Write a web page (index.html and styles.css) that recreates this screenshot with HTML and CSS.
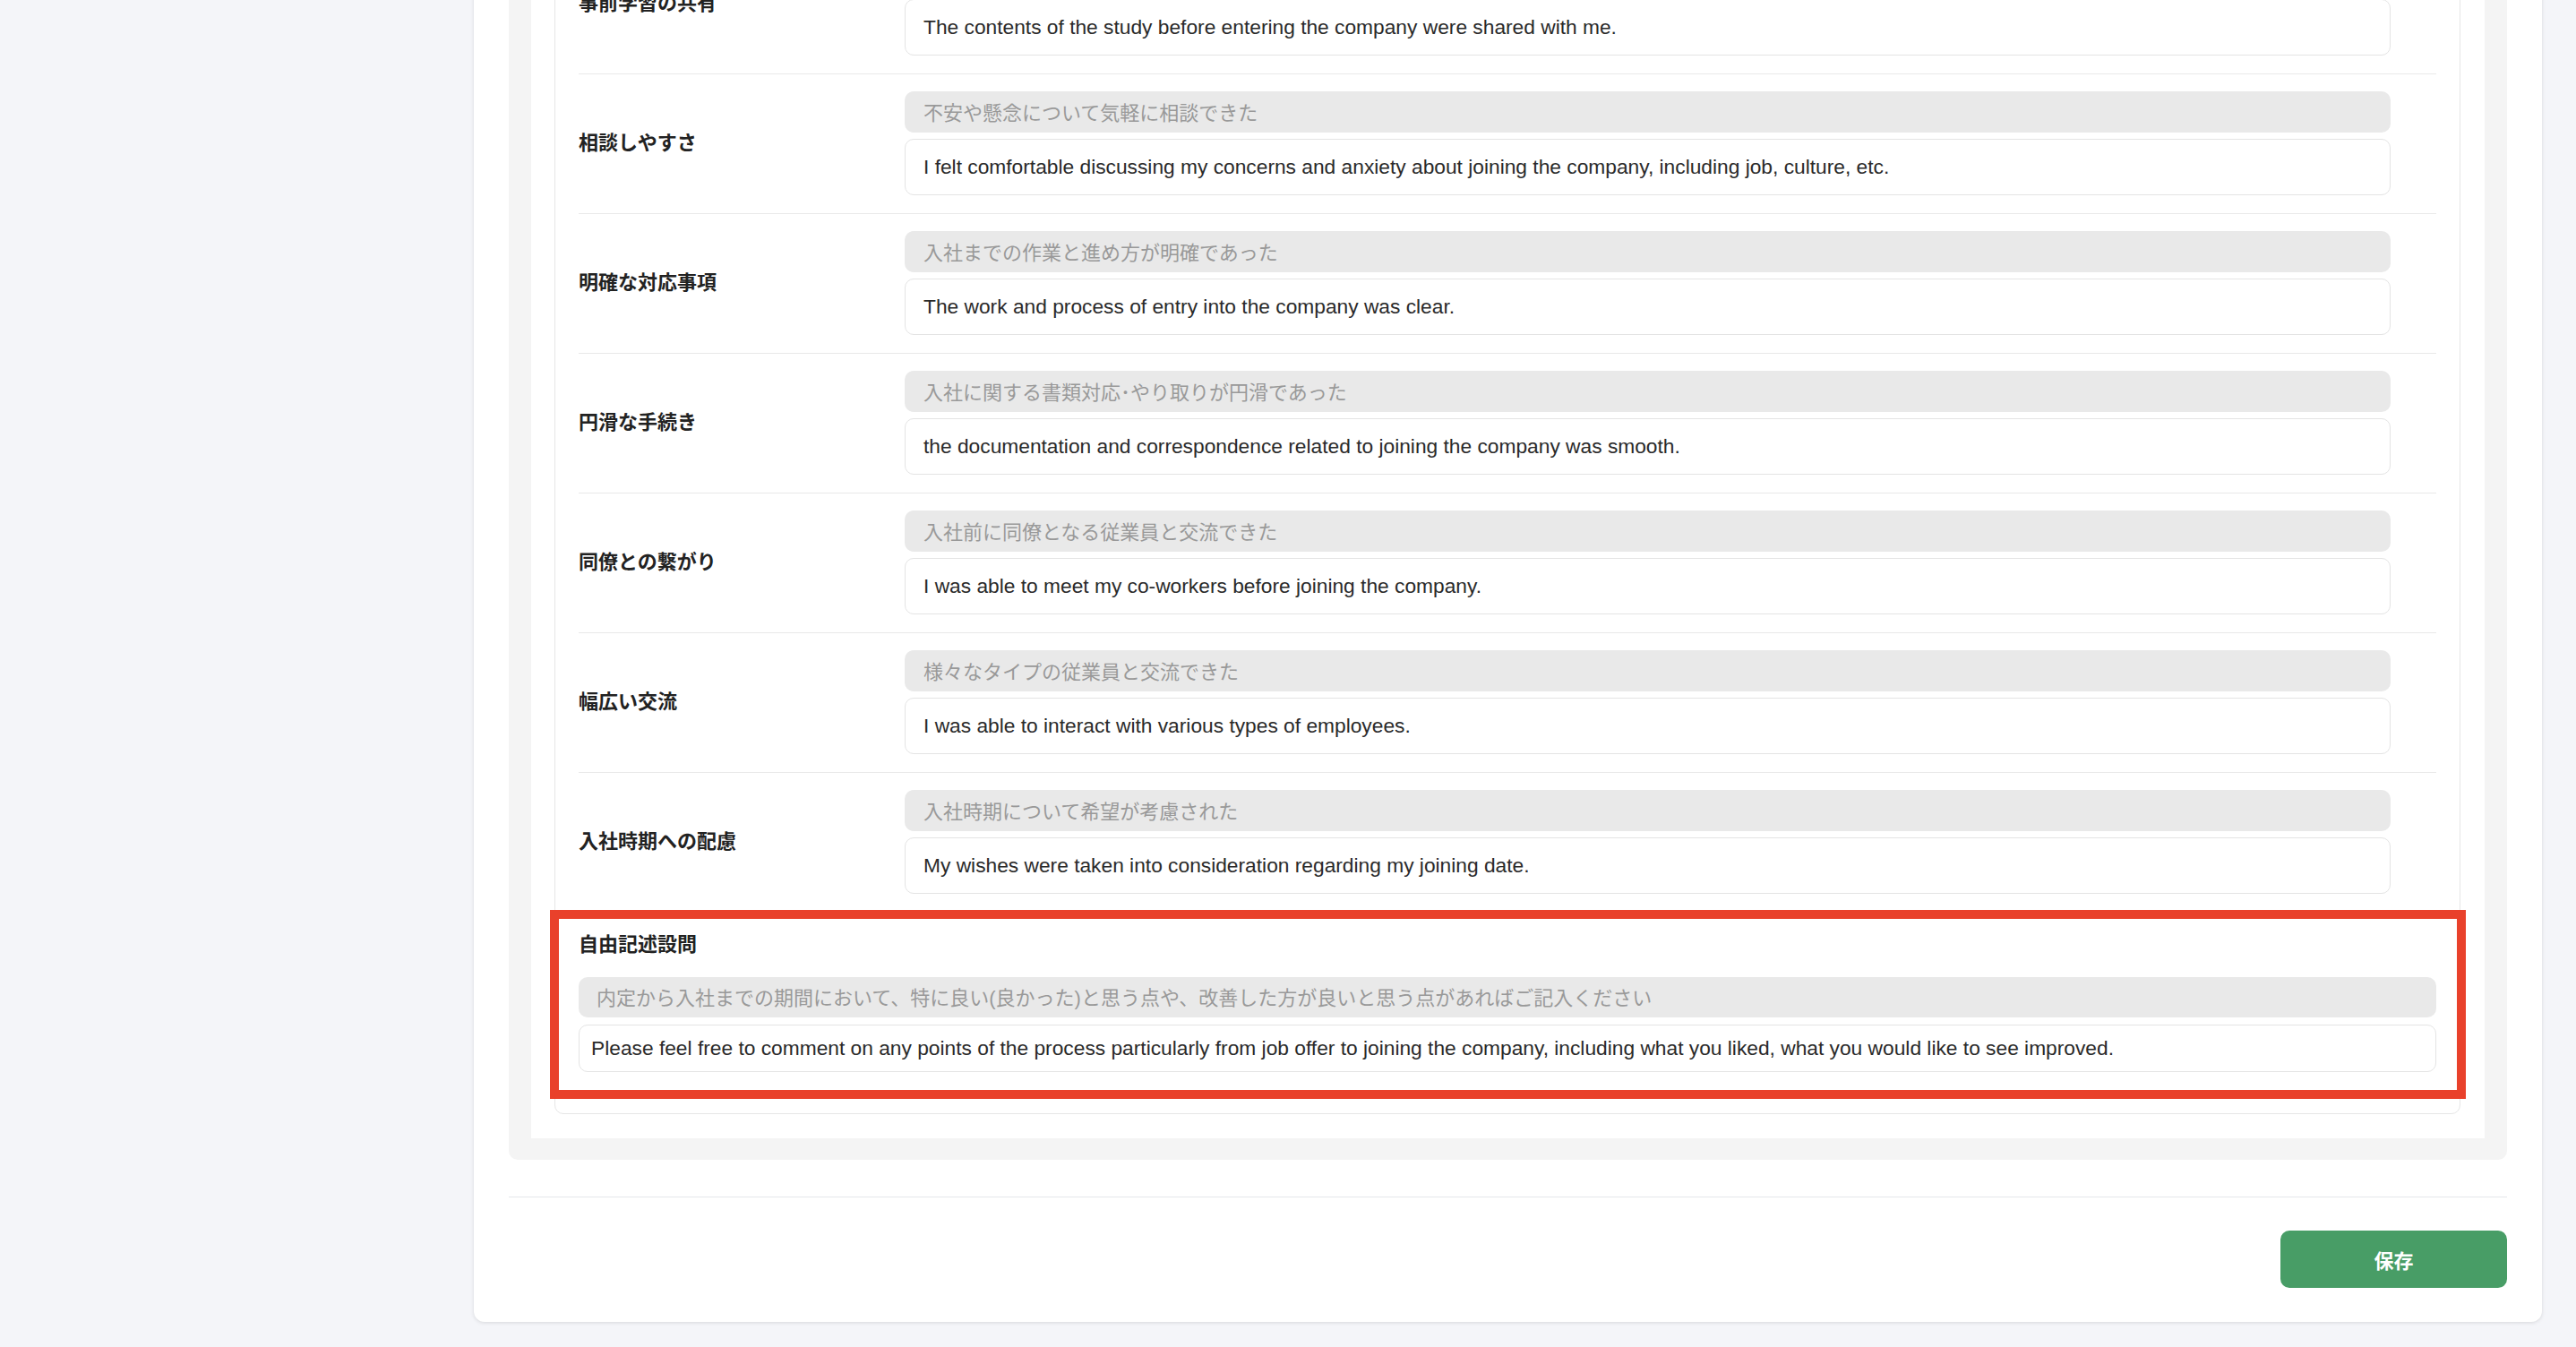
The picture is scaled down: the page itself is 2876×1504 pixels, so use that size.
FILE: index.html
```html
<!DOCTYPE html>
<html lang="ja">
<head>
    <meta charset="UTF-8">
    <title>アンケート設定</title>
    <link rel="stylesheet" href="styles.css">
</head>
<body>
    <div class="layout">
        <aside class="sidebar"></aside>

        <main class="main">
            <section class="card">
                <div class="panel">
                    <div class="panel-inner">
                        <div class="qbox">

                            <div class="row">
                                <p class="row-label">事前学習の共有</p>
                                <div class="row-fields">
                                    <div class="hint">入社前に学習すべき内容が共有された</div>
                                    <div class="field">The contents of the study before entering the company were shared with me.</div>
                                </div>
                            </div>

                            <div class="row">
                                <p class="row-label">相談しやすさ</p>
                                <div class="row-fields">
                                    <div class="hint">不安や懸念について気軽に相談できた</div>
                                    <div class="field">I felt comfortable discussing my concerns and anxiety about joining the company, including job, culture, etc.</div>
                                </div>
                            </div>

                            <div class="row">
                                <p class="row-label">明確な対応事項</p>
                                <div class="row-fields">
                                    <div class="hint">入社までの作業と進め方が明確であった</div>
                                    <div class="field">The work and process of entry into the company was clear.</div>
                                </div>
                            </div>

                            <div class="row">
                                <p class="row-label">円滑な手続き</p>
                                <div class="row-fields">
                                    <div class="hint">入社に関する書類対応･やり取りが円滑であった</div>
                                    <div class="field">the documentation and correspondence related to joining the company was smooth.</div>
                                </div>
                            </div>

                            <div class="row">
                                <p class="row-label">同僚との繋がり</p>
                                <div class="row-fields">
                                    <div class="hint">入社前に同僚となる従業員と交流できた</div>
                                    <div class="field">I was able to meet my co-workers before joining the company.</div>
                                </div>
                            </div>

                            <div class="row">
                                <p class="row-label">幅広い交流</p>
                                <div class="row-fields">
                                    <div class="hint">様々なタイプの従業員と交流できた</div>
                                    <div class="field">I was able to interact with various types of employees.</div>
                                </div>
                            </div>

                            <div class="row row-last">
                                <p class="row-label">入社時期への配慮</p>
                                <div class="row-fields">
                                    <div class="hint">入社時期について希望が考慮された</div>
                                    <div class="field">My wishes were taken into consideration regarding my joining date.</div>
                                </div>
                            </div>

                            <!-- free text question (highlighted) -->
                            <div class="free highlight">
                                <p class="free-label">自由記述設問</p>
                                <div class="hint free-hint">内定から入社までの期間において、特に良い(良かった)と思う点や、改善した方が良いと思う点があればご記入ください</div>
                                <div class="field free-field">Please feel free to comment on any points of the process particularly from job offer to joining the company, including what you liked, what you would like to see improved.</div>
                            </div>

                        </div>
                    </div>
                </div>

                <footer class="card-footer">
                    <button class="save-button">保存</button>
                </footer>
            </section>
        </main>
    </div>
</body>
</html>
```

FILE: styles.css
```css
body {
    margin: 0;
    background-color: #f4f5f9;
    font-family: "Liberation Sans", "Noto Sans CJK JP", sans-serif;
    color: #222;
    overflow: hidden;
}

.layout {
    display: flex;
    height: 1504px;
}

.sidebar {
    width: 529px;
    flex-shrink: 0;
}

.main {
    flex: 1;
    padding-right: 38px;
}

.card {
    margin-top: -154px;
    padding: 30px 39px 38px;
    background-color: #fff;
    border-radius: 12px;
    box-shadow: 0 1px 4px rgba(0, 0, 0, 0.12);
}

.panel {
    padding: 24px 25px;
    background-color: #f4f4f4;
    border-radius: 10px;
}

.panel-inner {
    padding: 26px 27px 27px 26px;
    background-color: #fff;
}

.qbox {
    padding: 0 26px;
    border: 1px solid #e6e6e6;
    border-radius: 10px;
}

.row {
    display: grid;
    grid-template-columns: 364px 1fr;
    align-items: center;
    padding: 19px 51px 20px 0;
    border-bottom: 1px solid #e9e9e9;
}

.row-last {
    border-bottom: none;
    padding-bottom: 19px;
}

.row-label,
.free-label {
    margin: 0;
    font-size: 22px;
    line-height: 32px;
    font-weight: bold;
    color: #222;
}

.row-fields {
    display: flex;
    flex-direction: column;
    gap: 7px;
}

.hint {
    display: flex;
    align-items: center;
    height: 46px;
    box-sizing: border-box;
    padding: 0 21px 3px;
    background-color: #e9e9e9;
    border-radius: 10px;
    font-size: 22px;
    color: #999;
    white-space: nowrap;
}

.field {
    display: flex;
    align-items: center;
    height: 63px;
    box-sizing: border-box;
    padding: 0 20px;
    border: 1px solid #e4e4e4;
    border-radius: 10px;
    font-size: 22.75px;
    color: #2a2a2a;
    white-space: nowrap;
}

.free {
    position: relative;
    padding: 22px 0 46px;
}

.free-hint {
    margin-top: 20px;
    height: 45px;
    padding: 0 20px 3px;
}

.free-field {
    margin-top: 8px;
    height: 53px;
    padding: 0 13px;
}

/* red annotation frame drawn over the free text block */
.highlight::after {
    content: "";
    position: absolute;
    top: -1px;
    left: -32px;
    right: -33px;
    bottom: 16px;
    border: 10px solid #e9412b;
    pointer-events: none;
}

.card-footer {
    display: flex;
    justify-content: flex-end;
    margin-top: 41px;
    padding-top: 37px;
    border-top: 1px solid #e5e7eb;
}

.save-button {
    width: 253px;
    height: 64px;
    border: none;
    border-radius: 10px;
    background-color: #489d66;
    color: #fff;
    font-family: "Noto Sans CJK JP", sans-serif;
    font-size: 22px;
    font-weight: bold;
    cursor: pointer;
}
```
